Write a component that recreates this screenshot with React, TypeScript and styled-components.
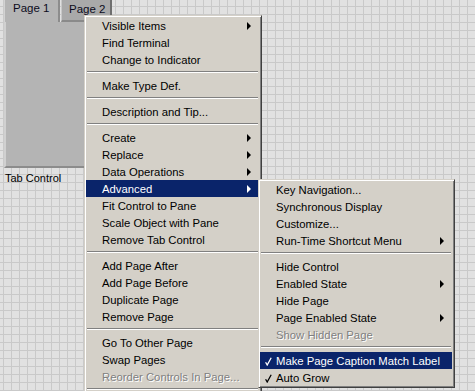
import React from 'react';
import styled, { createGlobalStyle } from 'styled-components';

type Entry =
  | { kind: 'sep' }
  | {
      kind: 'item';
      label: string;
      sub?: boolean;
      active?: boolean;
      disabled?: boolean;
      checked?: boolean;
    };

const item = (label: string, extra: Partial<Omit<Entry, 'kind'>> = {}): Entry => ({
  kind: 'item',
  label,
  ...extra
} as Entry);
const sep: Entry = { kind: 'sep' };

const mainMenu: Array<Entry> = [
  item('Visible Items', { sub: true }),
  item('Find Terminal'),
  item('Change to Indicator'),
  sep,
  item('Make Type Def.'),
  sep,
  item('Description and Tip...'),
  sep,
  item('Create', { sub: true }),
  item('Replace', { sub: true }),
  item('Data Operations', { sub: true }),
  item('Advanced', { sub: true, active: true }),
  item('Fit Control to Pane'),
  item('Scale Object with Pane'),
  item('Remove Tab Control'),
  sep,
  item('Add Page After'),
  item('Add Page Before'),
  item('Duplicate Page'),
  item('Remove Page'),
  sep,
  item('Go To Other Page'),
  item('Swap Pages'),
  item('Reorder Controls In Page...', { disabled: true }),
  sep
];

const advancedMenu: Array<Entry> = [
  item('Key Navigation...'),
  item('Synchronous Display'),
  item('Customize...'),
  item('Run-Time Shortcut Menu', { sub: true }),
  sep,
  item('Hide Control'),
  item('Enabled State', { sub: true }),
  item('Hide Page'),
  item('Page Enabled State', { sub: true }),
  item('Show Hidden Page', { disabled: true }),
  sep,
  item('Make Page Caption Match Label', { checked: true, active: true }),
  item('Auto Grow', { checked: true })
];

const GlobalStyle = createGlobalStyle`
  html, body {
    margin: 0;
    padding: 0;
    overflow: hidden;
  }
  body {
    font-family: "Liberation Sans", Arial, sans-serif;
    font-size: 11px;
  }
`;

const Canvas = styled.div`
  position: relative;
  width: 475px;
  height: 391px;
  overflow: hidden;
  background-color: #e1e1e1;
  background-image: linear-gradient(to right, #c9c9c9 1px, transparent 1px),
    linear-gradient(to bottom, #c9c9c9 1px, transparent 1px);
  background-size: 8px 8px;
  background-position: 3px 6px;
`;

const TabControl = styled.div`
  position: absolute;
  left: 4px;
  top: -8px;
  display: flex;
  flex-direction: column;
`;

const TabRow = styled.div`
  display: flex;
  align-items: flex-end;
  height: 30px;
`;

const Tab = styled.div<{ selected?: boolean }>`
  box-sizing: border-box;
  height: 30px;
  width: ${p => (p.selected ? '56px' : '51px')};
  padding: ${p => (p.selected ? '10px 0 0 8px' : '11px 0 0 7px')};
  background: ${p => (p.selected ? '#b4b4b4' : '#a9a9a9')};
  color: #0c0c1c;
  font-size: 11.5px;
  border-left: 1px solid ${p => (p.selected ? '#d2d2d2' : '#c8c8c8')};
  border-right: 2px solid ${p => (p.selected ? '#8c8c8c' : '#6e6e6e')};
  border-bottom: ${p => (p.selected ? 'none' : '2px solid #8a8a8a')};
  margin-left: ${p => (p.selected ? '0' : '1px')};
`;

const TabBody = styled.div`
  box-sizing: border-box;
  width: 110px;
  height: 146px;
  background: #b4b4b4;
  border-left: 2px solid #d0d0d0;
  border-bottom: 2px solid #8c8c8c;
`;

const Caption = styled.div`
  margin-top: 4px;
  margin-left: 1px;
  color: #000;
  font-size: 11px;
`;

const Menu = styled.div<{ x: number; y: number; w: number }>`
  position: absolute;
  left: ${p => p.x}px;
  top: ${p => p.y}px;
  width: ${p => p.w}px;
  box-sizing: border-box;
  padding: 1px;
  background: #d4d0c8;
  border: 1px solid;
  border-color: #d4d0c8 #404040 #404040 #d4d0c8;
  box-shadow: inset 1px 1px #ffffff, inset -1px -1px #808080;
  display: flex;
  flex-direction: column;
`;

const Row = styled.div<{ active?: boolean; disabled?: boolean }>`
  position: relative;
  display: flex;
  align-items: center;
  height: 17px;
  padding-left: 16px;
  padding-right: 8px;
  margin-right: 1px;
  background: ${p => (p.active ? '#0a246a' : 'transparent')};
  color: ${p => (p.active ? '#ffffff' : p.disabled ? '#808080' : '#000000')};
  text-shadow: ${p => (p.disabled ? '1px 1px 0 #ffffff' : 'none')};
  white-space: nowrap;
`;

const Label = styled.span`
  flex: 1;
  height: 17px;
  line-height: 18px;
  font-size: 11.3px;
`;

const Arrow = styled.span<{ active?: boolean }>`
  width: 0;
  height: 0;
  border-top: 4px solid transparent;
  border-bottom: 4px solid transparent;
  border-left: 4px solid ${p => (p.active ? '#ffffff' : '#000000')};
`;

const Check = styled.svg`
  position: absolute;
  left: 5px;
  top: 5px;
`;

const Separator = styled.div`
  height: 9px;
  padding-top: 3px;
  box-sizing: border-box;
  &::before {
    content: '';
    display: block;
    height: 1px;
    margin: 0 2px 0 1px;
    background: #808080;
    border-bottom: 1px solid #ffffff;
  }
`;

function MenuList({ entries }: { entries: Array<Entry> }) {
  return (
    <>
      {entries.map((e, i) => {
        if (e.kind === 'sep') {
          return <Separator key={i} />;
        }
        return (
          <Row key={i} active={e.active} disabled={e.disabled}>
            {e.checked ? (
              <Check width="7" height="9" viewBox="0 0 7 9">
                <path
                  d="M0.6 5.2 L2.2 8 L6.2 0.8"
                  fill="none"
                  stroke={e.active ? '#ffffff' : '#000000'}
                  strokeWidth="1.3"
                />
              </Check>
            ) : null}
            <Label>{e.label}</Label>
            {e.sub ? <Arrow active={e.active} /> : null}
          </Row>
        );
      })}
    </>
  );
}

export default function App() {
  return (
    <Canvas>
      <GlobalStyle />
      <TabControl>
        <TabRow>
          <Tab selected>Page 1</Tab>
          <Tab>Page 2</Tab>
        </TabRow>
        <TabBody />
        <Caption>Tab Control</Caption>
      </TabControl>
      <Menu x={84} y={15} w={178}>
        <MenuList entries={mainMenu} />
      </Menu>
      <Menu x={258} y={179} w={197}>
        <MenuList entries={advancedMenu} />
      </Menu>
    </Canvas>
  );
}
